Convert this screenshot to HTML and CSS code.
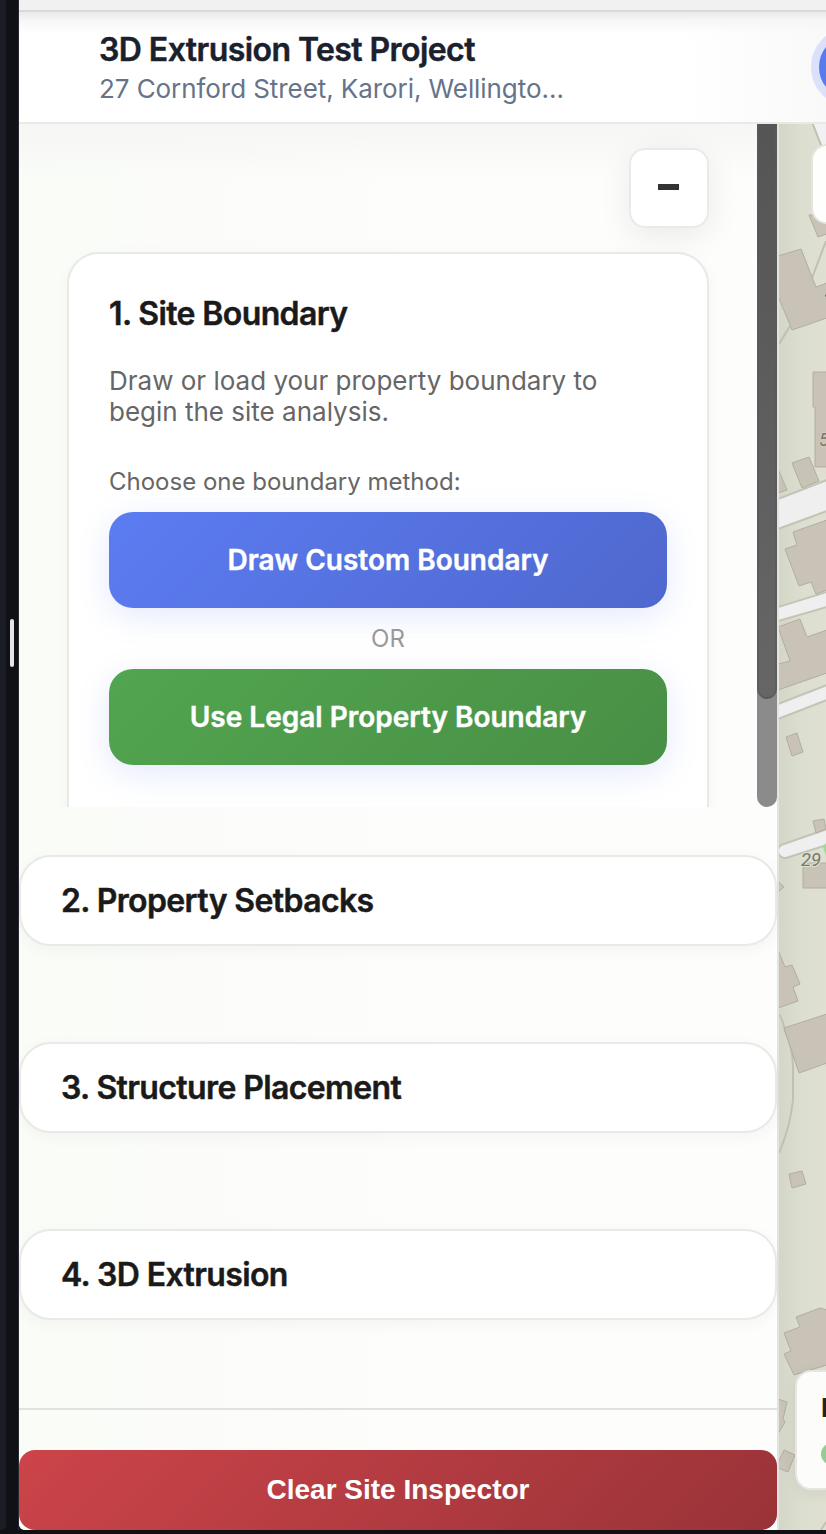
FILE: index.html
```html
<!DOCTYPE html>
<html lang="en">
<head>
<meta charset="utf-8">
<title>3D Extrusion Test Project</title>
<link rel="stylesheet" href="styles.css">
</head>
<body>
<div class="app">
  <aside class="rail"><div class="rail-edge"></div><div class="splitter"><span class="grip"></span></div></aside>
  <main class="window">
    <div class="topbar"></div>
    <header class="header">
      <div class="titles">
        <h1 class="project"><span>3D Extrusion Test Project</span></h1>
        <p class="address"><span>27 Cornford Street, Karori, Wellingto…</span></p>
      </div>
      <span class="avatar"></span>
    </header>
    <div class="workspace">
      <section class="panel">
        <div class="scroller">
          <div class="scroll-content">
            <button class="collapse" aria-label="Collapse"><span class="minus"></span></button>
            <article class="card">
              <h2 class="heading"><span>1. Site Boundary</span></h2>
              <p class="description"><span class="d1">Draw or load your property boundary to</span><br><span class="d2">begin the site analysis.</span></p>
              <p class="method"><span>Choose one boundary method:</span></p>
              <button class="action draw"><span>Draw Custom Boundary</span></button>
              <p class="or">OR</p>
              <button class="action legal"><span>Use Legal Property Boundary</span></button>
            </article>
          </div>
          <div class="scrollbar"><div class="thumb"></div></div>
        </div>
        <nav class="steps">
          <div class="step"><h2 class="heading"><span>2. Property Setbacks</span></h2></div>
          <div class="step"><h2 class="heading"><span>3. Structure Placement</span></h2></div>
          <div class="step"><h2 class="heading"><span>4. 3D Extrusion</span></h2></div>
        </nav>
        <footer class="footer"><button class="clear"><span>Clear Site Inspector</span></button></footer>
      </section>
      <section class="map">
        <svg class="map-art" width="47" height="1406" viewBox="779 124 47 1406">
          <defs>
            <linearGradient id="land" x1="0" x2="1" y1="0" y2="0"><stop offset="0" stop-color="#d4d6c8"/><stop offset=".5" stop-color="#dcdecf"/><stop offset="1" stop-color="#dfe0d2"/></linearGradient>
          </defs>
          <rect x="779" y="124" width="47" height="1406" fill="url(#land)"/>
          <path d="M812 124L826 158V124Z" fill="#f1f1f1"/>
          <g fill="none" stroke="#c0c1b2" stroke-width="2">
            <path d="M812 122L826 158M826 241L812 278M790 326L779 344M779 1014Q784 1022 785 1031Q793 1048 793 1068V1100Q790 1128 779 1153"/>
            <path d="M821 1530L826 1522"/>
          </g>
          <g fill="#efefef" stroke="#c3c4b5" stroke-width="2">
            <path d="M778 499L827 480V511L778 529Z"/>
            <path d="M778 607L827 592V607L778 621Z"/>
            <path d="M778 704L827 685V700L778 719Z"/>
            <path d="M827 829L784 844A7 7 0 0 0 786 858L827 845Z"/>
          </g>
          <path d="M826 843L823 847L826 856Z" fill="#9edb91"/>
          <g fill="#c8c3b6" stroke="#b2ae9f" stroke-width="1">
            <path d="M809 215L818 237L827 234V215Z"/>
            <path d="M778 256L801 249L816 287L827 283V318L792 330L778 296Z"/>
            <path d="M813 372H827V467H815V407H813Z"/>
            <path d="M792 463L809 457L819 481L802 488Z"/>
            <path d="M778 469L787 490L778 493Z"/>
            <path d="M827 520L793 532L797 545L785 549L799 586L811 582L816 594L827 590Z"/>
            <path d="M778 627L800 619L807 637L827 630V673L778 690V664L790 661Z"/>
            <path d="M786 737L797 733L803 752L792 756Z"/>
            <path d="M813 821L824 819L826 829L816 833Z"/>
            <path d="M803 863H827V888H803Z"/>
            <path d="M778 881L784 887L778 892Z"/>
            <path d="M778 950L785 967L792 965L800 984L793 987L798 1001L778 1008Z"/>
            <path d="M784 1028L827 1014V1063L799 1073Z"/>
            <path d="M789 1174L802 1171L806 1184L792 1188Z"/>
            <path d="M827 1333V1310L820 1308L796 1317L800 1327L784 1333L791 1351L784 1354L794 1375L827 1365Z"/>
            <path d="M778 1399L787 1402L783 1419L785 1422L778 1434Z"/>
            <path d="M784 1450L795 1455L788 1472L778 1468V1463Z"/>
          </g>
          <path d="M825 295L827 294V300Z" fill="#55554e"/>
          <text class="map-label on-building" x="819" y="446">5</text>
          <text class="map-label" x="801" y="866" textLength="20" lengthAdjust="spacingAndGlyphs">29</text>
        </svg>
        <div class="map-control"></div>
        <div class="legend"><b>L</b><span class="dot"></span></div>
      </section>
    </div>
  </main>
</div>
</body>
</html>
```
FILE: styles.css
```css
* { box-sizing: border-box; }
body, h1, h2, p { margin: 0; }
body { font-family: Inter, "Liberation Sans", sans-serif; overflow: hidden; }
button { font: inherit; border: 0; padding: 0; display: block; }
.app { width: 826px; height: 1534px; display: flex; background: #101117; padding-bottom: 4px; }
.rail { width: 19px; display: flex; flex: none; }
.rail-edge { width: 6px; background: #1a1d25; border-bottom-right-radius: 5px; }
.splitter { flex: 1; display: flex; align-items: center; padding: 0 0 244px 4px; border-right: 1px solid #292a30; }
.grip { width: 4px; height: 48px; border-radius: 2px; background: #e5e5e8; }
.window { flex: 1; min-width: 0; display: flex; flex-direction: column; background: #fdfdfc; overflow: hidden; border-bottom-left-radius: 6px; }
.topbar { height: 12px; flex: none; background: #f1f1f1; border-bottom: 2px solid #d9d9d9; }
.header { height: 112px; flex: none; display: flex; justify-content: space-between; border-bottom: 2px solid #e9e9e8; padding: 20px 0 0 80px; background: linear-gradient(#eaeaea, #f7f7f7 9px, rgba(255,255,255,0) 22px), linear-gradient(90deg, #fff 82%, #f9f9f9); }
.project { font-size: 32px; line-height: 36px; font-weight: 600; letter-spacing: -.57px; color: #1a202c; white-space: nowrap; -webkit-text-stroke: .45px currentColor; }
.address { font-size: 26px; line-height: 32px; margin-top: 5px; letter-spacing: -.07px; color: #667389; white-space: nowrap; }
.avatar { flex: none; width: 80px; height: 80px; margin: -5px -65px 0 0; border-radius: 50%; border: 8px solid #dbe1fa; background: #5a7af0; }
.workspace { flex: 1; display: flex; min-height: 0; }
.panel { width: 760px; flex: none; border-right: 2px solid #e3e3e2; background: linear-gradient(#f6f6f5, rgba(250,252,248,0) 55px), linear-gradient(90deg, #fafcf8, #fdfdfc 55%); display: flex; flex-direction: column; }
.scroller { height: 683px; flex: none; display: flex; overflow: hidden; }
.scroll-content { flex: 1; padding: 24px 48px 0; }
.collapse { width: 80px; height: 80px; margin-left: auto; display: flex; align-items: center; justify-content: center; border: 2px solid #eaeaea; border-radius: 16px; background: #fff; box-shadow: 0 8px 32px rgba(0,0,0,.08); }
.minus { width: 21px; height: 6px; margin: -2px 1px 0 0; background: #333; }
.card { height: 650px; margin-top: 24px; border: 2px solid #e9e9e8; border-radius: 32px; padding: 40px; background: #fff; box-shadow: 0 4px 16px rgba(0,0,0,.04); }
.heading { font-size: 32px; line-height: 40px; font-weight: 600; letter-spacing: -.62px; color: #1a1a1a; white-space: nowrap; -webkit-text-stroke: .45px currentColor; }
.description { margin-top: 31px; font-size: 26px; line-height: 31px; color: #666; white-space: nowrap; }
.method { margin-top: 40px; font-size: 24px; line-height: 29px; color: #666; }
.action { width: 100%; height: 96px; border-radius: 24px; color: #fff; font-size: 28px; font-weight: 600; -webkit-text-stroke: .4px currentColor; box-shadow: 0 8px 32px rgba(91,122,240,.16); }
.draw { margin-top: 16px; background: linear-gradient(135deg, #5c7cf2, #4f68ce); }
.legal { background: linear-gradient(135deg, #52a550, #488f45); }
.or { height: 61px; line-height: 61px; text-align: center; font-size: 24px; color: #999; }
.scrollbar { width: 20px; flex: none; background: #8b8b8b; border-radius: 0 0 10px 10px; }
.thumb { height: 575px; background: linear-gradient(#555, #666); border: 2px solid rgba(90,90,90,.7); border-top: 0; border-radius: 0 0 10px 10px; }
.steps { display: flex; flex-direction: column; gap: 96px; padding: 48px 0 88px; }
.step { height: 91px; border: 2px solid #e9e9e8; border-radius: 32px; background: #fff; padding: 24px 40px; box-shadow: 0 4px 16px rgba(0,0,0,.04); }
.footer { border-top: 2px solid #e1e1e0; padding-top: 40px; }
.clear { width: 100%; height: 80px; border-radius: 16px; color: #fff; font-family: "Liberation Sans", Arial, sans-serif; font-weight: 700; font-size: 28px; background: linear-gradient(135deg, #cc444a, #993338); }
.map { position: relative; flex: 1; overflow: hidden; }
.map-art { display: block; }
.map-label { font: italic 18px Roboto, sans-serif; fill: #77776c; stroke: #dfe0d2; stroke-width: 2px; paint-order: stroke; }
.on-building { stroke: #d0cbbe; }
.map-control { position: absolute; left: 32px; top: 20px; width: 80px; height: 80px; border: 2px solid #e5e5e0; border-radius: 16px; background: #fefefc; }
.legend { position: absolute; left: 16px; top: 1246px; width: 200px; height: 120px; border: 2px solid #e5e5e2; border-radius: 16px; background: #fcfcfb; box-shadow: 0 4px 16px rgba(0,0,0,.06); padding: 20px 24px; font-size: 26px; line-height: 32px; color: #222; }
.legend b { display: block; }
.dot { display: block; width: 22px; height: 22px; margin-top: 19px; border-radius: 50%; background: #94cc93; }
```
